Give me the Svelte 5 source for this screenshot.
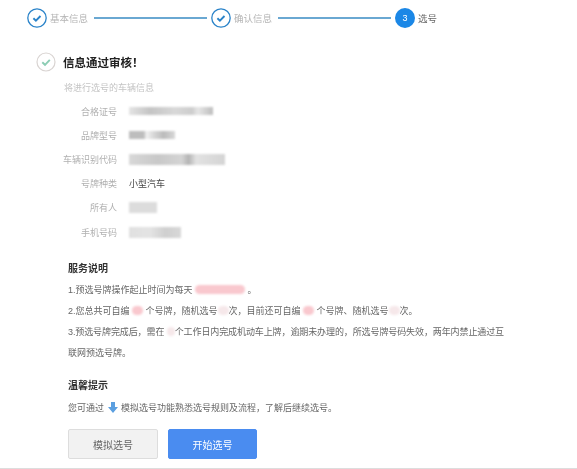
<script>
  const steps = [
    { label: '基本信息', done: true },
    { label: '确认信息', done: true },
    { label: '选号', done: false, num: 3 }
  ];

  const rows = [
    { label: '合格证号', blur: 'b1' },
    { label: '品牌型号', blur: 'b2' },
    { label: '车辆识别代码', blur: 'b3' },
    { label: '号牌种类', value: '小型汽车' },
    { label: '所有人', blur: 'b4' },
    { label: '手机号码', blur: 'b5' }
  ];
</script>

<div class="page">
  <div class="steps">
    {#each steps as step, i}
      {#if i > 0}<span class="line"></span>{/if}
      <div class="step">
        {#if step.done}
          <svg class="circle" width="20" height="20" viewBox="0 0 20 20">
            <circle cx="10" cy="10" r="9.2" fill="#fff" stroke="#2a83c9" stroke-width="1.3" />
            <path d="M6.4 10.2l2.5 2.4 4.6-4.6" fill="none" stroke="#2a83c9" stroke-width="1.9" />
          </svg>
          <span class="step-label muted">{step.label}</span>
        {:else}
          <span class="num">{step.num}</span>
          <span class="step-label">{step.label}</span>
        {/if}
      </div>
    {/each}
  </div>

  <div class="result">
    <svg width="20" height="20" viewBox="0 0 20 20">
      <circle cx="10" cy="10" r="9" fill="#fff" stroke="#d9d4d2" stroke-width="1.2" />
      <path d="M6.3 10.2l2.7 2.6 4.8-5" fill="none" stroke="#8ccdb4" stroke-width="1.9" />
    </svg>
    <h1>信息通过审核！</h1>
  </div>
  <p class="sub">将进行选号的车辆信息</p>

  <div class="rows">
    {#each rows as row}
      <div class="row">
        <span class="label">{row.label}</span>
        {#if row.value}
          <span class="value">{row.value}</span>
        {:else}
          <span class="redact {row.blur}"></span>
        {/if}
      </div>
    {/each}
  </div>

  <section class="service">
    <h2>服务说明</h2>
    <p>1.预选号牌操作起止时间为每天 <span class="pink w48"></span> 。</p>
    <p>2.您总共可自编 <span class="pink w12"></span> 个号牌，随机选号<span class="pale w12"></span>次，目前还可自编 <span class="pink w12"></span> 个号牌、随机选号<span class="pale w12"></span>次。</p>
    <p class="tight">3.预选号牌完成后，需在 <span class="pale w8"></span>个工作日内完成机动车上牌，逾期未办理的，所选号牌号码失效，两年内禁止通过互</p>
    <p>联网预选号牌。</p>
  </section>

  <section class="tips">
    <h2>温馨提示</h2>
    <p>
      您可通过
      <svg class="arrow" width="10" height="11" viewBox="0 0 10 11">
        <path d="M3 0h4v5h3L5 11 0 5h3z" fill="#5b9fe0" />
      </svg>
      模拟选号功能熟悉选号规则及流程，了解后继续选号。
    </p>
  </section>

  <div class="actions">
    <button type="button" class="btn">模拟选号</button>
    <button type="button" class="btn primary">开始选号</button>
  </div>
</div>

<style>
:global(body) {
  margin: 0;
  background: #fff;
}

.page {
  height: 469px;
  box-sizing: border-box;
  border-bottom: 1px solid #ddd;
  overflow: hidden;
  font-family: "Liberation Sans", "Noto Sans CJK SC", sans-serif;
  color: #666;
  font-size: 9px;
  filter: blur(0.3px);
}

.steps {
  display: flex;
  align-items: center;
  height: 20px;
  padding: 8px 0 0 27px;
}

.step {
  display: flex;
  align-items: center;
  gap: 3px;
}

.circle {
  display: block;
}

.step-label {
  font-size: 9.5px;
  color: #666;
}

.muted {
  color: #b4b4b4;
}

.line {
  width: 113px;
  height: 2px;
  margin: 0 4px 0 6px;
  background: #6aa8d2;
}

.num {
  width: 20px;
  height: 20px;
  border-radius: 50%;
  background: #1b87e6;
  color: #fff;
  font-size: 9px;
  display: flex;
  align-items: center;
  justify-content: center;
}

.result {
  display: flex;
  align-items: center;
  gap: 7px;
  margin: 24px 0 0 36px;
  height: 20px;
}

h1 {
  margin: 0;
  font-size: 11.5px;
  font-weight: 700;
  color: #222;
}

.sub {
  margin: 10px 0 0 64px;
  line-height: 12px;
  font-size: 9px;
  color: #c4c4c4;
}

.rows {
  margin-top: 5px;
  display: flex;
  flex-direction: column;
}

.row {
  display: flex;
  align-items: center;
  height: 24.2px;
}

.label {
  width: 117px;
  text-align: right;
  color: #b0b0b0;
}

.value {
  margin-left: 12px;
  color: #444;
}

.redact {
  margin-left: 12px;
  height: 8px;
  filter: blur(1.2px);
}

.b1 {
  width: 84px;
  background: linear-gradient(90deg, #e4e4e4, #c4c4c4 25%, #d8d8d8 55%, #cdcdcd 75%, #e6e6e6 82%, #bdbdbd);
}

.b2 {
  width: 46px;
  background: linear-gradient(90deg, #bdbdbd 32%, #f2f2f2 38%, #ddd 50%, #bbb 75%, #d8d8d8);
}

.b3 {
  width: 96px;
  height: 11px;
  background: linear-gradient(90deg, #d8d8d8, #c8c8c8 30%, #d4d4d4 55%, #b4b4b4 62%, #e2e2e2 70%, #d4d4d4);
}

.b4 {
  width: 28px;
  height: 11px;
  background: #dcdcdc;
}

.b5 {
  width: 52px;
  height: 11px;
  background: linear-gradient(90deg, #e0e0e0, #e4e4e4 40%, #cfcfcf 70%, #d8d8d8);
}

.service {
  margin: 18px 0 0 68px;
}

h2 {
  margin: 0;
  font-size: 10px;
  line-height: 14px;
  font-weight: 700;
  color: #333;
}

.service p {
  margin: 0;
  height: 21px;
  line-height: 21px;
  white-space: nowrap;
}

.service .tight {
  letter-spacing: -0.1px;
}

.service h2 {
  margin-bottom: 4px;
}

.pink,
.pale {
  display: inline-block;
  height: 9px;
  vertical-align: -1px;
  border-radius: 5px;
  filter: blur(1px);
}

.pink { background: #f9c8ce; }
.pale { background: #f6e8ea; }
.w48 { width: 50px; }
.w12 { width: 11px; }
.w8 { width: 8px; }

.tips {
  margin: 15px 0 0 68px;
}

.tips p {
  margin: 8px 0 0;
  line-height: 14px;
  white-space: nowrap;
}

.arrow {
  vertical-align: -2px;
  margin: 0 1px;
}

.actions {
  display: flex;
  gap: 10px;
  margin: 14px 0 0 68px;
}

.btn {
  width: 90px;
  height: 30px;
  padding: 0;
  border: 1px solid #ddd;
  border-radius: 2px;
  background: #f2f2f2;
  color: #666;
  font: inherit;
  font-size: 10px;
}

.primary {
  width: 89px;
  border-color: #4a8cf0;
  background: #4a8cf0;
  color: #fff;
}
</style>
